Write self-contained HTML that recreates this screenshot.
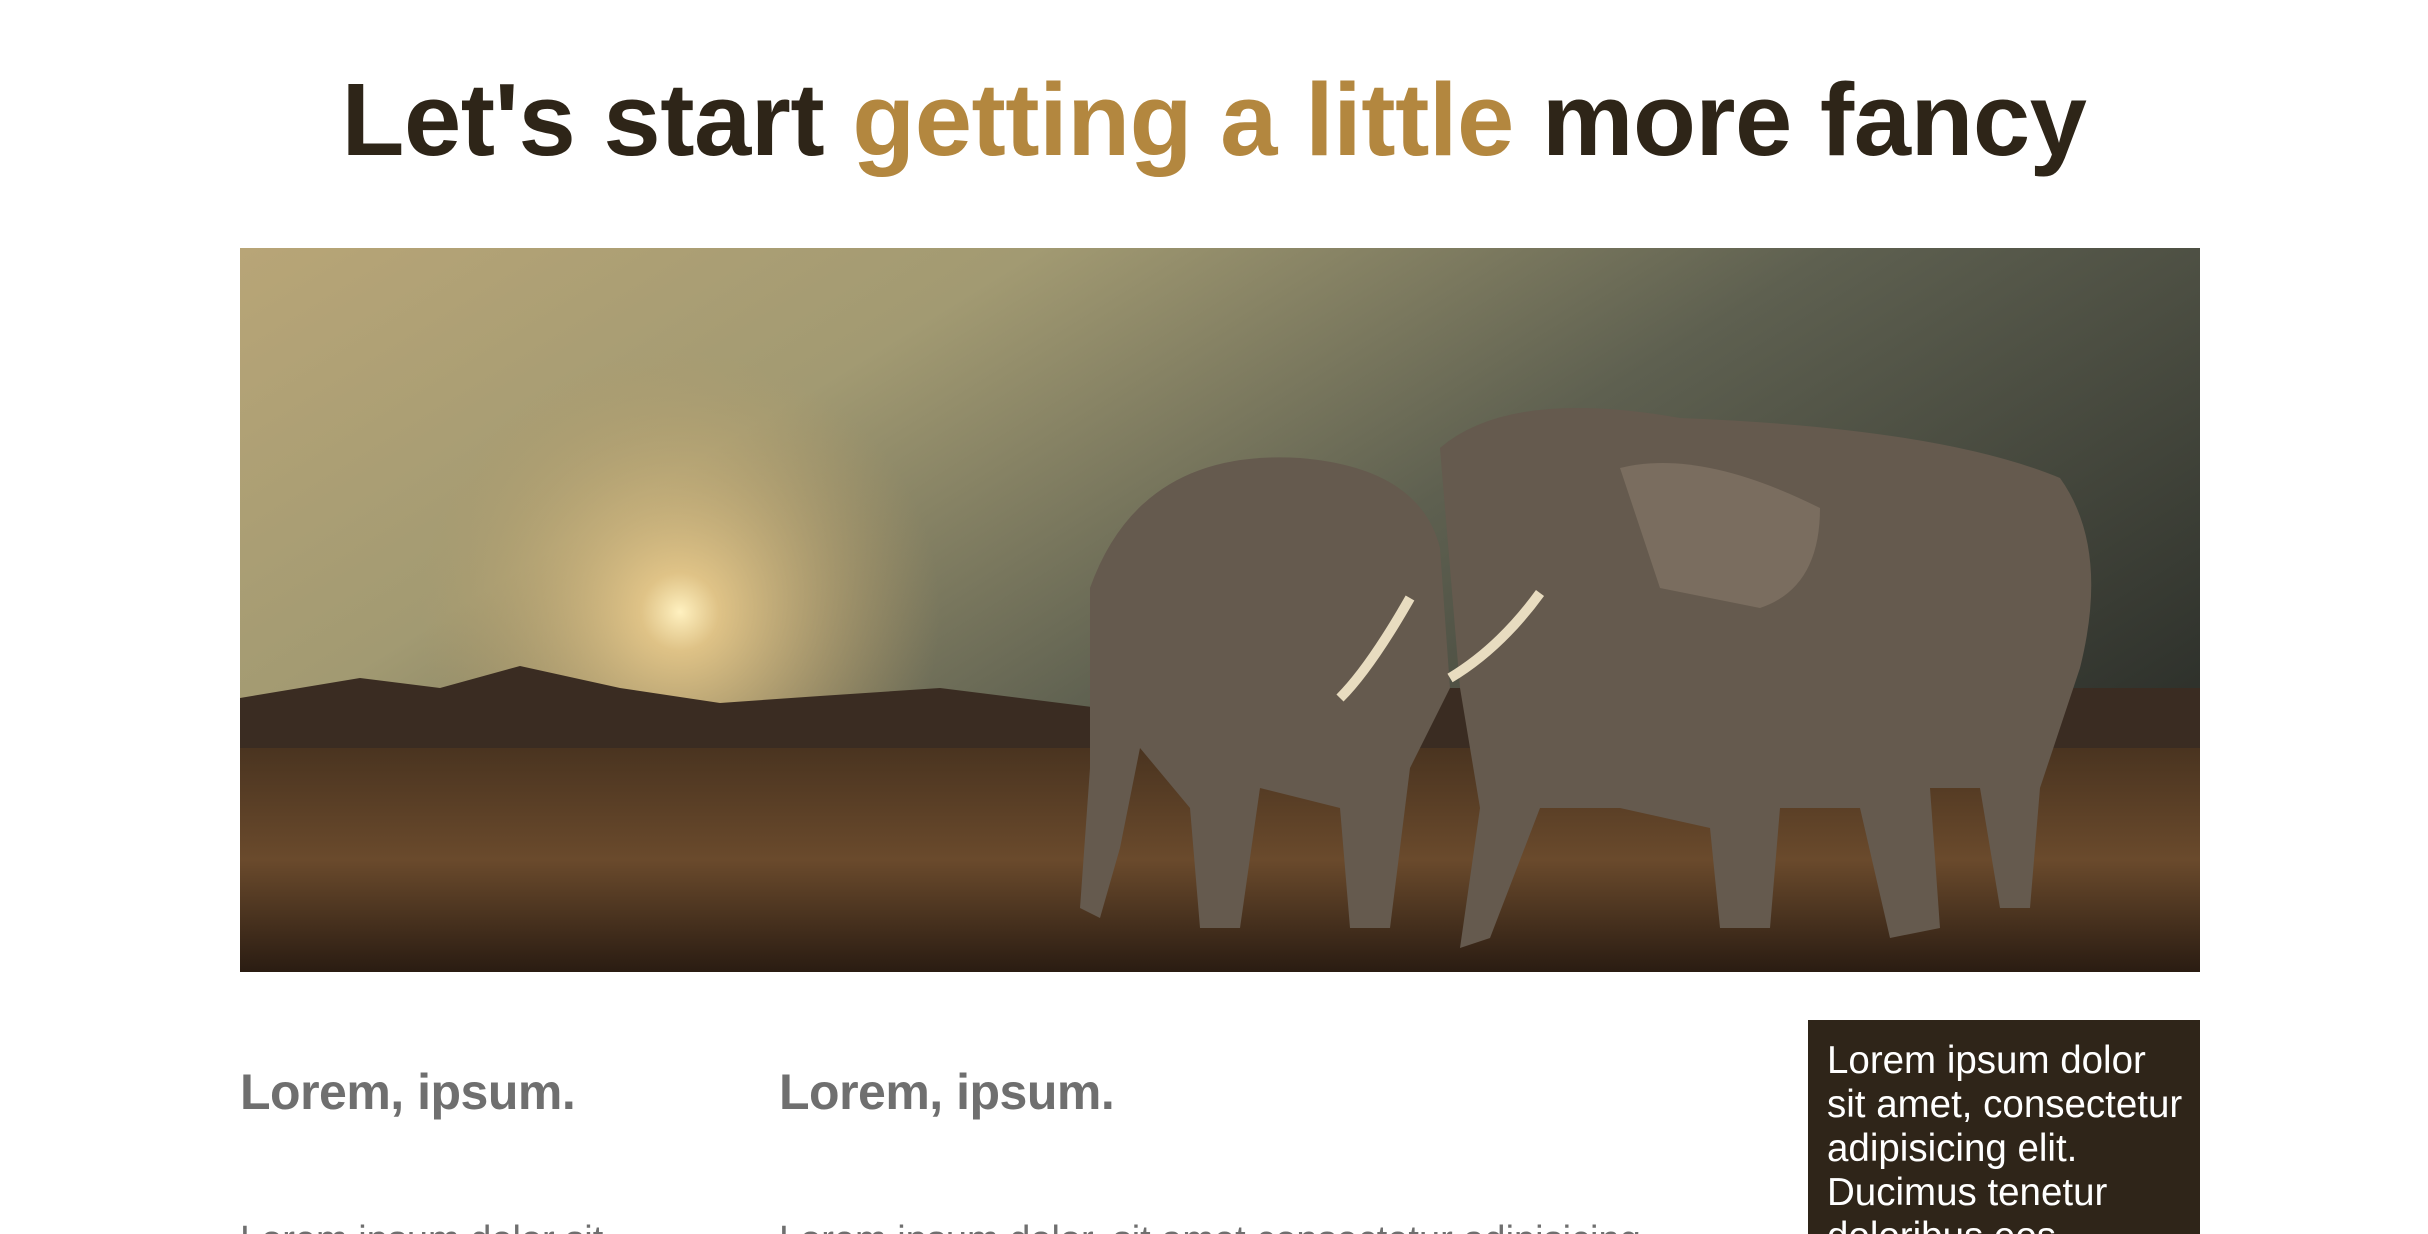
<!DOCTYPE html>
<html><head><meta charset="utf-8"><style>
html,body{margin:0;padding:0;background:#fff;overflow:hidden;font-family:"Liberation Sans",Arial,sans-serif}
#w{position:relative;width:2428px;height:1234px;overflow:hidden}
h1{position:absolute;left:0;width:2428px;top:50px;margin:0;text-align:center;font-size:103px;font-weight:bold;color:#2e2518;letter-spacing:-0.5px;line-height:140px}
h1 span{color:#b3873f}
.img{position:absolute;left:240px;top:248px;width:1960px;height:724px}
h2{position:absolute;top:1062px;margin:0;font-size:50px;color:#6f6f6f;font-weight:bold;line-height:60px;letter-spacing:-0.5px}
p{position:absolute;top:1218px;margin:0;font-size:38px;color:#6f6f6f;line-height:44px;white-space:nowrap}
.box{position:absolute;left:1808px;top:1020px;width:392px;height:260px;background:#2f2519;color:#fff;box-sizing:border-box;padding:19px 16px 0 19px;font-size:38.5px;line-height:44px}
</style></head><body><div id="w">
<h1>Let's start <span>getting a little</span> more fancy</h1>
<svg class="img" viewBox="0 0 1960 724" preserveAspectRatio="none">
<defs>
<linearGradient id="sky" x1="0" y1="0" x2="1" y2="0.6">
<stop offset="0" stop-color="#b8a577"/><stop offset="0.3" stop-color="#a29a72"/><stop offset="0.6" stop-color="#5e6050"/><stop offset="1" stop-color="#2f322c"/></linearGradient>
<radialGradient id="sun" cx="440" cy="364" r="260" gradientUnits="userSpaceOnUse">
<stop offset="0" stop-color="#fff1c0"/><stop offset="0.15" stop-color="#e8c98a" stop-opacity="0.9"/><stop offset="1" stop-color="#b59a66" stop-opacity="0"/></radialGradient>
<linearGradient id="gr" x1="0" y1="0" x2="0" y2="1"><stop offset="0" stop-color="#4a3420"/><stop offset="0.5" stop-color="#6a4a2c"/><stop offset="1" stop-color="#2a1c12"/></linearGradient>
</defs>
<rect width="1960" height="724" fill="url(#sky)"/>
<rect width="1960" height="724" fill="url(#sun)"/>
<path d="M0 450 L120 430 L200 440 L280 418 L380 440 L480 455 L580 448 L700 440 L860 460 L1100 440 L1960 440 L1960 520 L0 520Z" fill="#3a2c22"/>
<rect y="500" width="1960" height="224" fill="url(#gr)"/>
<g fill="#655a4e">
<path d="M850 340 Q900 200 1060 210 Q1180 220 1200 300 L1210 440 L1170 520 L1150 680 L1110 680 L1100 560 L1020 540 L1000 680 L960 680 L950 560 L900 500 L880 600 L860 670 L840 660 L850 520 Z"/>
<path d="M1200 200 Q1270 140 1440 170 Q1700 180 1820 230 Q1870 300 1840 420 L1800 540 L1790 660 L1760 660 L1740 540 L1690 540 L1700 680 L1650 690 L1620 560 L1540 560 L1530 680 L1480 680 L1470 580 L1380 560 L1300 560 L1250 690 L1220 700 L1240 560 L1220 440 Z"/>
</g>
<path d="M1380 220 Q1460 200 1580 260 Q1580 340 1520 360 L1420 340 Z" fill="#7a6d5f"/>
<path d="M1170 350 Q1130 420 1100 450 M1300 345 Q1260 400 1210 430" stroke="#e8dcc0" stroke-width="10" fill="none"/>
</svg>
<h2 style="left:240px">Lorem, ipsum.</h2>
<h2 style="left:779px">Lorem, ipsum.</h2>
<p style="left:240px">Lorem ipsum dolor sit</p>
<p style="left:779px">Lorem ipsum dolor, sit amet consectetur adipisicing</p>
<div class="box">Lorem ipsum dolor sit amet, consectetur adipisicing elit. Ducimus tenetur doloribus eos</div>
</div></body></html>
